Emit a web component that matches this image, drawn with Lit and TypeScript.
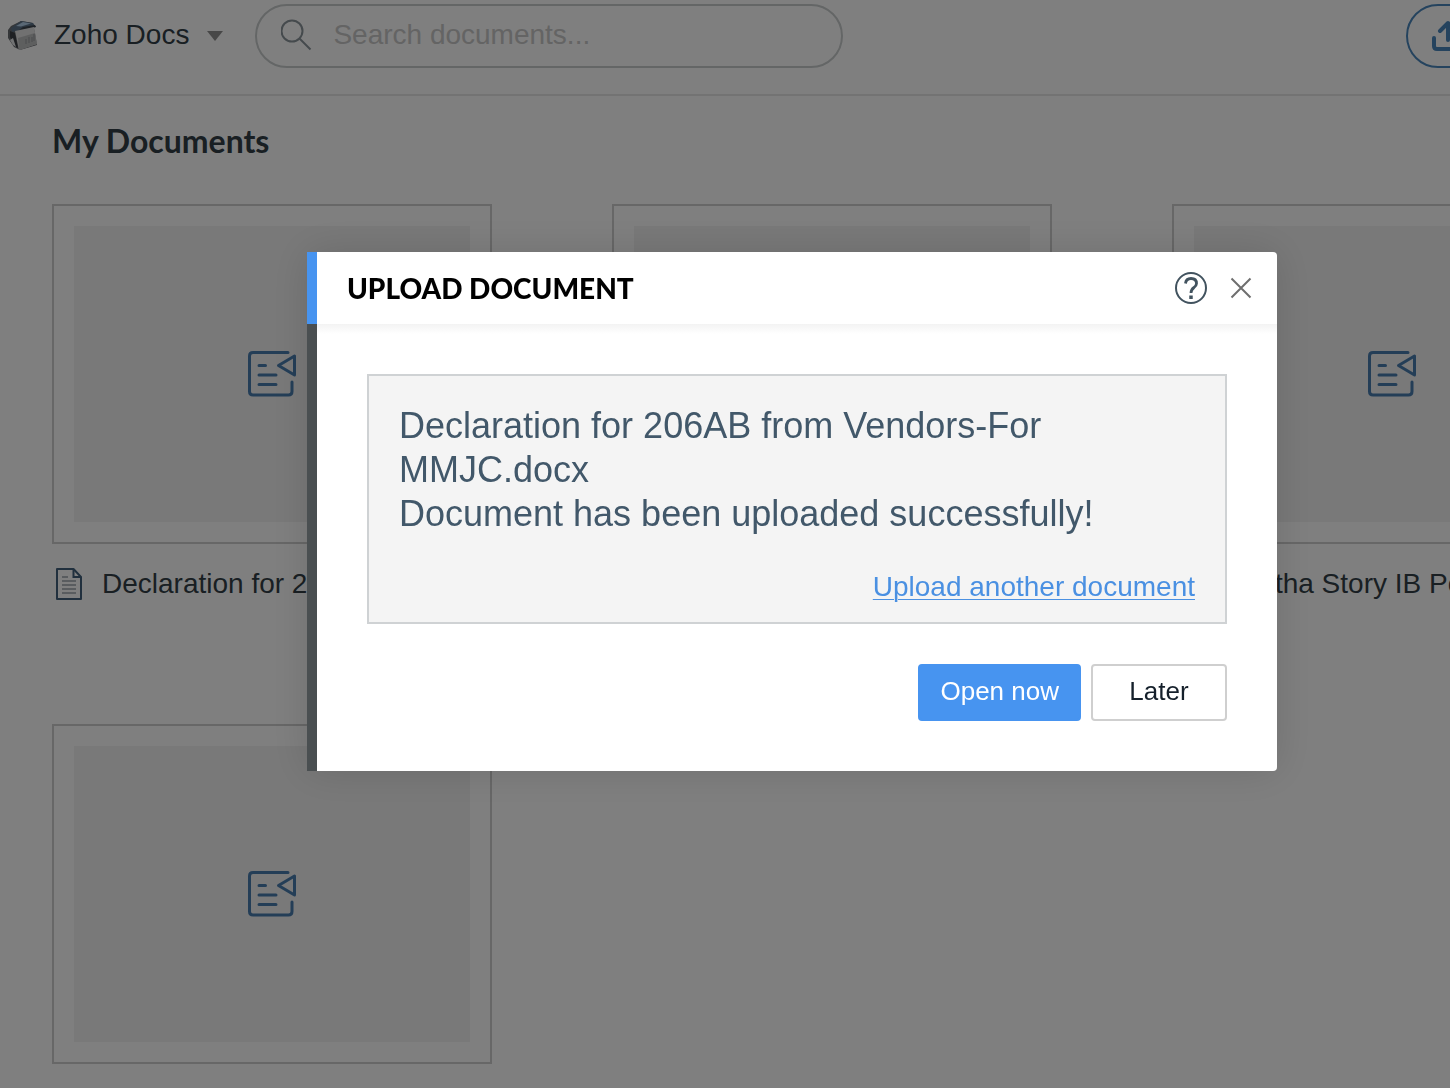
import { LitElement, html, css, svg } from "lit";
import { customElement, property } from "lit/decorators.js";

@customElement("doc-card")
export class DocCard extends LitElement {
  @property() name = "";

  static styles = css`
    :host {
      display: block;
      min-width: 0;
    }
    .thumb {
      display: block;
      box-sizing: border-box;
      height: 340px;
      padding: 20px;
      border: 2px solid #cfcfcf;
      background: #fff;
    }
    .preview {
      display: flex;
      align-items: center;
      justify-content: center;
      height: 100%;
      background: #f3f3f3;
    }
    .preview svg {
      width: 48px;
      height: 48px;
    }
    .label {
      display: flex;
      align-items: center;
      gap: 18px;
      height: 32px;
      padding: 24px 0 0 4px;
    }
    .label svg {
      flex: none;
      width: 28px;
      height: 34px;
      overflow: visible;
    }
    .name {
      overflow: hidden;
      white-space: nowrap;
      text-overflow: ellipsis;
      font-size: 28px;
      line-height: 32px;
      color: #333f47;
    }
  `;

  render() {
    return html`
      <a class="thumb" href="#" aria-label=${this.name || "Document"}>
        <span class="preview">
          <svg viewBox="0 0 48 48" fill="none" stroke="#497daf" stroke-width="3" stroke-linecap="round" stroke-linejoin="round" aria-hidden="true">
            <path d="M40 2.500H5Q1.500 2.500 1.500 6V41.500Q1.500 45 5 45H40.500Q44 45 44 41.500V32" />
            <path d="M11 15.500H17.500M11 25H28M11 34.500H28" />
            <path d="M46.500 6V25L30.500 15.500Z" />
          </svg>
        </span>
      </a>
      ${this.name
        ? html`<div class="label">
            <svg viewBox="0 0 28 34" fill="none" aria-hidden="true">
              <path d="M1 2H17.500L25 10V32H1Z" stroke="#42617c" stroke-width="2" stroke-linejoin="round" />
              <path d="M17.500 2V10H25" stroke="#42617c" stroke-width="2" />
              <path d="M6 10H12M6 14H20M6 18H20M6 22H20M6 26H20" stroke="#b2b9be" stroke-width="2" />
            </svg>
            <span class="name">${this.name}</span>
          </div>`
        : null}
    `;
  }
}

@customElement("upload-dialog")
export class UploadDialog extends LitElement {
  static styles = css`
    :host {
      display: block;
      min-width: 0;
    }
    .dialog {
      border-radius: 0 4px 4px 0;
      box-shadow: 0 0 40px rgba(0, 0, 0, 0.13);
    }
    .head {
      display: flex;
      align-items: center;
      gap: 19px;
      box-sizing: border-box;
      height: 72px;
      padding: 0 22px 0 30px;
      border-left: 10px solid #4794f0;
      border-radius: 0 4px 0 0;
      background: #fff;
      background-clip: padding-box;
    }
    h2 {
      flex: 1;
      margin: 0;
      font: 900 28px/36px Lato, sans-serif;
      color: #000;
    }
    .icon {
      display: flex;
      padding: 0;
      border: 0;
      background: none;
    }
    .body {
      padding: 50px;
      border-left: 10px solid #4a4f51;
      border-radius: 0 0 4px 0;
      background: linear-gradient(#f3f3f3, #fff 10px);
      background-clip: padding-box;
    }
    .notice {
      padding: 28px 30px 19px;
      border: 2px solid #cfd2d4;
      background: #f4f4f4;
    }
    p {
      margin: 0;
      font-size: 36px;
      line-height: 44px;
      color: #42586a;
    }
    .more {
      display: flex;
      justify-content: flex-end;
      margin-top: 35px;
      font-size: 28px;
      line-height: 32px;
    }
    .more a {
      color: #4a90e2;
      text-decoration-thickness: 1px;
      text-underline-offset: 3px;
    }
    .actions {
      display: flex;
      justify-content: flex-end;
      gap: 10px;
      margin-top: 40px;
    }
    .btn {
      box-sizing: border-box;
      height: 57px;
      padding: 0 20px 4px;
      border: 2px solid #cfcfcf;
      border-radius: 4px;
      background: #fff;
      font: 26px/30px "Liberation Sans", Arial, sans-serif;
      color: #15202b;
    }
    .primary {
      border-color: #4794f0;
      background: #4794f0;
      color: #fff;
    }
    .later {
      min-width: 136px;
    }
  `;

  render() {
    return html`
      <section class="dialog" role="dialog" aria-labelledby="title">
        <header class="head">
          <h2 id="title">UPLOAD DOCUMENT</h2>
          <button class="icon" aria-label="Help">
            <svg width="34" height="34" viewBox="0 0 34 34" fill="none" stroke="#42535f" aria-hidden="true">
              <circle cx="17" cy="17" r="15" stroke-width="2" />
              <path d="M11.500 12.500Q12 7.500 17 7.500Q22.500 7.500 22.500 12.500Q22.500 14.500 20 16.500Q17 18.500 17 22" stroke-width="2.800" />
              <path d="M17 24.500V28" stroke-width="3.500" />
            </svg>
          </button>
          <button class="icon" aria-label="Close">
            <svg width="28" height="28" viewBox="0 0 28 28" fill="none" stroke="#6e6e6e" stroke-width="2" aria-hidden="true">
              <path d="M4.500 4.500L23.500 23.500M23.500 4.500L4.500 23.500" />
            </svg>
          </button>
        </header>
        <div class="body">
          <div class="notice">
            <p>Declaration for 206AB from Vendors-For MMJC.docx</p>
            <p>Document has been uploaded successfully!</p>
            <div class="more"><a href="#">Upload another document</a></div>
          </div>
          <div class="actions">
            <button class="btn primary">Open now</button>
            <button class="btn later">Later</button>
          </div>
        </div>
      </section>
    `;
  }
}

@customElement("app-root")
export class AppRoot extends LitElement {
  static styles = css`
    :host {
      display: block;
      height: 100vh;
      overflow: hidden;
      background: #fff;
      font-family: "Liberation Sans", Arial, sans-serif;
    }
    .bar {
      display: flex;
      align-items: center;
      box-sizing: border-box;
      height: 96px;
      padding: 0 0 24px 6px;
      border-bottom: 2px solid #e6e6e6;
      overflow: hidden;
    }
    .app {
      display: flex;
      align-items: center;
      gap: 16px;
      padding: 0;
      border: 0;
      background: none;
      font: 28px/32px "Liberation Sans", Arial, sans-serif;
      color: #333f47;
    }
    .search {
      display: flex;
      align-items: center;
      gap: 20px;
      box-sizing: border-box;
      flex: 0 1 588px;
      height: 64px;
      margin: 2px 0 0 30px;
      padding: 0 24px 2px;
      border: 2px solid #c8cccd;
      border-radius: 32px;
    }
    .search svg {
      flex: none;
    }
    .search input {
      flex: 1;
      min-width: 0;
      padding: 0;
      border: 0;
      outline: 0;
      background: none;
      font: 28px/32px "Liberation Sans", Arial, sans-serif;
      color: #333f47;
    }
    .search input::placeholder {
      color: #c8c8c8;
      opacity: 1;
    }
    .upload {
      display: flex;
      align-items: center;
      flex: none;
      box-sizing: border-box;
      width: 140px;
      height: 64px;
      margin: 2px -96px 0 auto;
      padding: 0 22px 2px;
      border: 2px solid #4a87bd;
      border-radius: 32px;
      background: none;
    }
    main {
      padding: 25px 52px 0;
    }
    h1 {
      margin: 0;
      font: 700 32px/40px Lato, sans-serif;
      color: #333f47;
    }
    .grid {
      display: grid;
      grid-template-columns: repeat(3, 440px);
      grid-auto-rows: 400px;
      gap: 120px;
      margin-top: 43px;
    }
    .overlay {
      position: fixed;
      inset: 0;
      padding: 252px 173px 0 307px;
      background: rgba(0, 0, 0, 0.5);
    }
  `;

  private docs = [
    "Declaration for 206AB",
    "",
    "Mastha Story IB Poster",
    "",
  ];

  private logo = svg`
    <path d="M2 11L5 7L15 2L27 4L31 26L14 31L8 28L2 19Z" fill="#6b6e72" />
    <path d="M5 9L15 2L27 4L30 8L11 12L6 13Z" fill="#5d7389" />
    <path d="M10 7L17 3L25 4.500L15 7.500Z" fill="#b4d0ea" />
    <path d="M17 8L29 6L30 8L12 12Z" fill="#3f464e" />
    <path d="M4 12L9 14L12 29L8 27L4 18Z" fill="#3d4146" />
    <path d="M4 21L7 19L10 28L7 26Z" fill="#e4e6e8" />
    <path d="M9 12L28 8L31 25L13 31Z" fill="#e2e2e2" />
    <path d="M12 19L29 14L31 25L13 31Z" fill="#bdbebf" />
    <path d="M20 20V25M23 18V24M26 18V23M28 15V22" stroke="#93969a" stroke-width="1" />`;

  render() {
    return html`
      <header class="bar">
        <button class="app">
          <svg width="32" height="32" viewBox="0 0 32 32" aria-hidden="true">${this.logo}</svg>
          <span>Zoho Docs</span>
          <svg width="20" height="12" viewBox="0 0 20 12" aria-hidden="true">
            <path d="M2 2H18L10 12Z" fill="#8f8f8f" />
          </svg>
        </button>
        <label class="search">
          <svg width="32" height="32" viewBox="0 0 32 32" fill="none" stroke="#8b959b" stroke-width="2" aria-hidden="true">
            <circle cx="11" cy="12" r="10.500" />
            <path d="M18.500 19.500L29.500 30.500" />
          </svg>
          <input type="search" placeholder="Search documents..." aria-label="Search documents" />
        </label>
        <button class="upload" aria-label="Upload">
          <svg width="34" height="34" viewBox="0 0 34 34" fill="none" stroke="#4a87bd" stroke-width="4" stroke-linecap="round" stroke-linejoin="round" aria-hidden="true">
            <path d="M4 20V28Q4 31 7 31H27Q30 31 30 28V20M18 22V5M10 13L18 5L26 13" />
          </svg>
        </button>
      </header>
      <main>
        <h1>My Documents</h1>
        <div class="grid">
          ${this.docs.map((name) => html`<doc-card .name=${name}></doc-card>`)}
        </div>
      </main>
      <div class="overlay"><upload-dialog></upload-dialog></div>
    `;
  }
}
